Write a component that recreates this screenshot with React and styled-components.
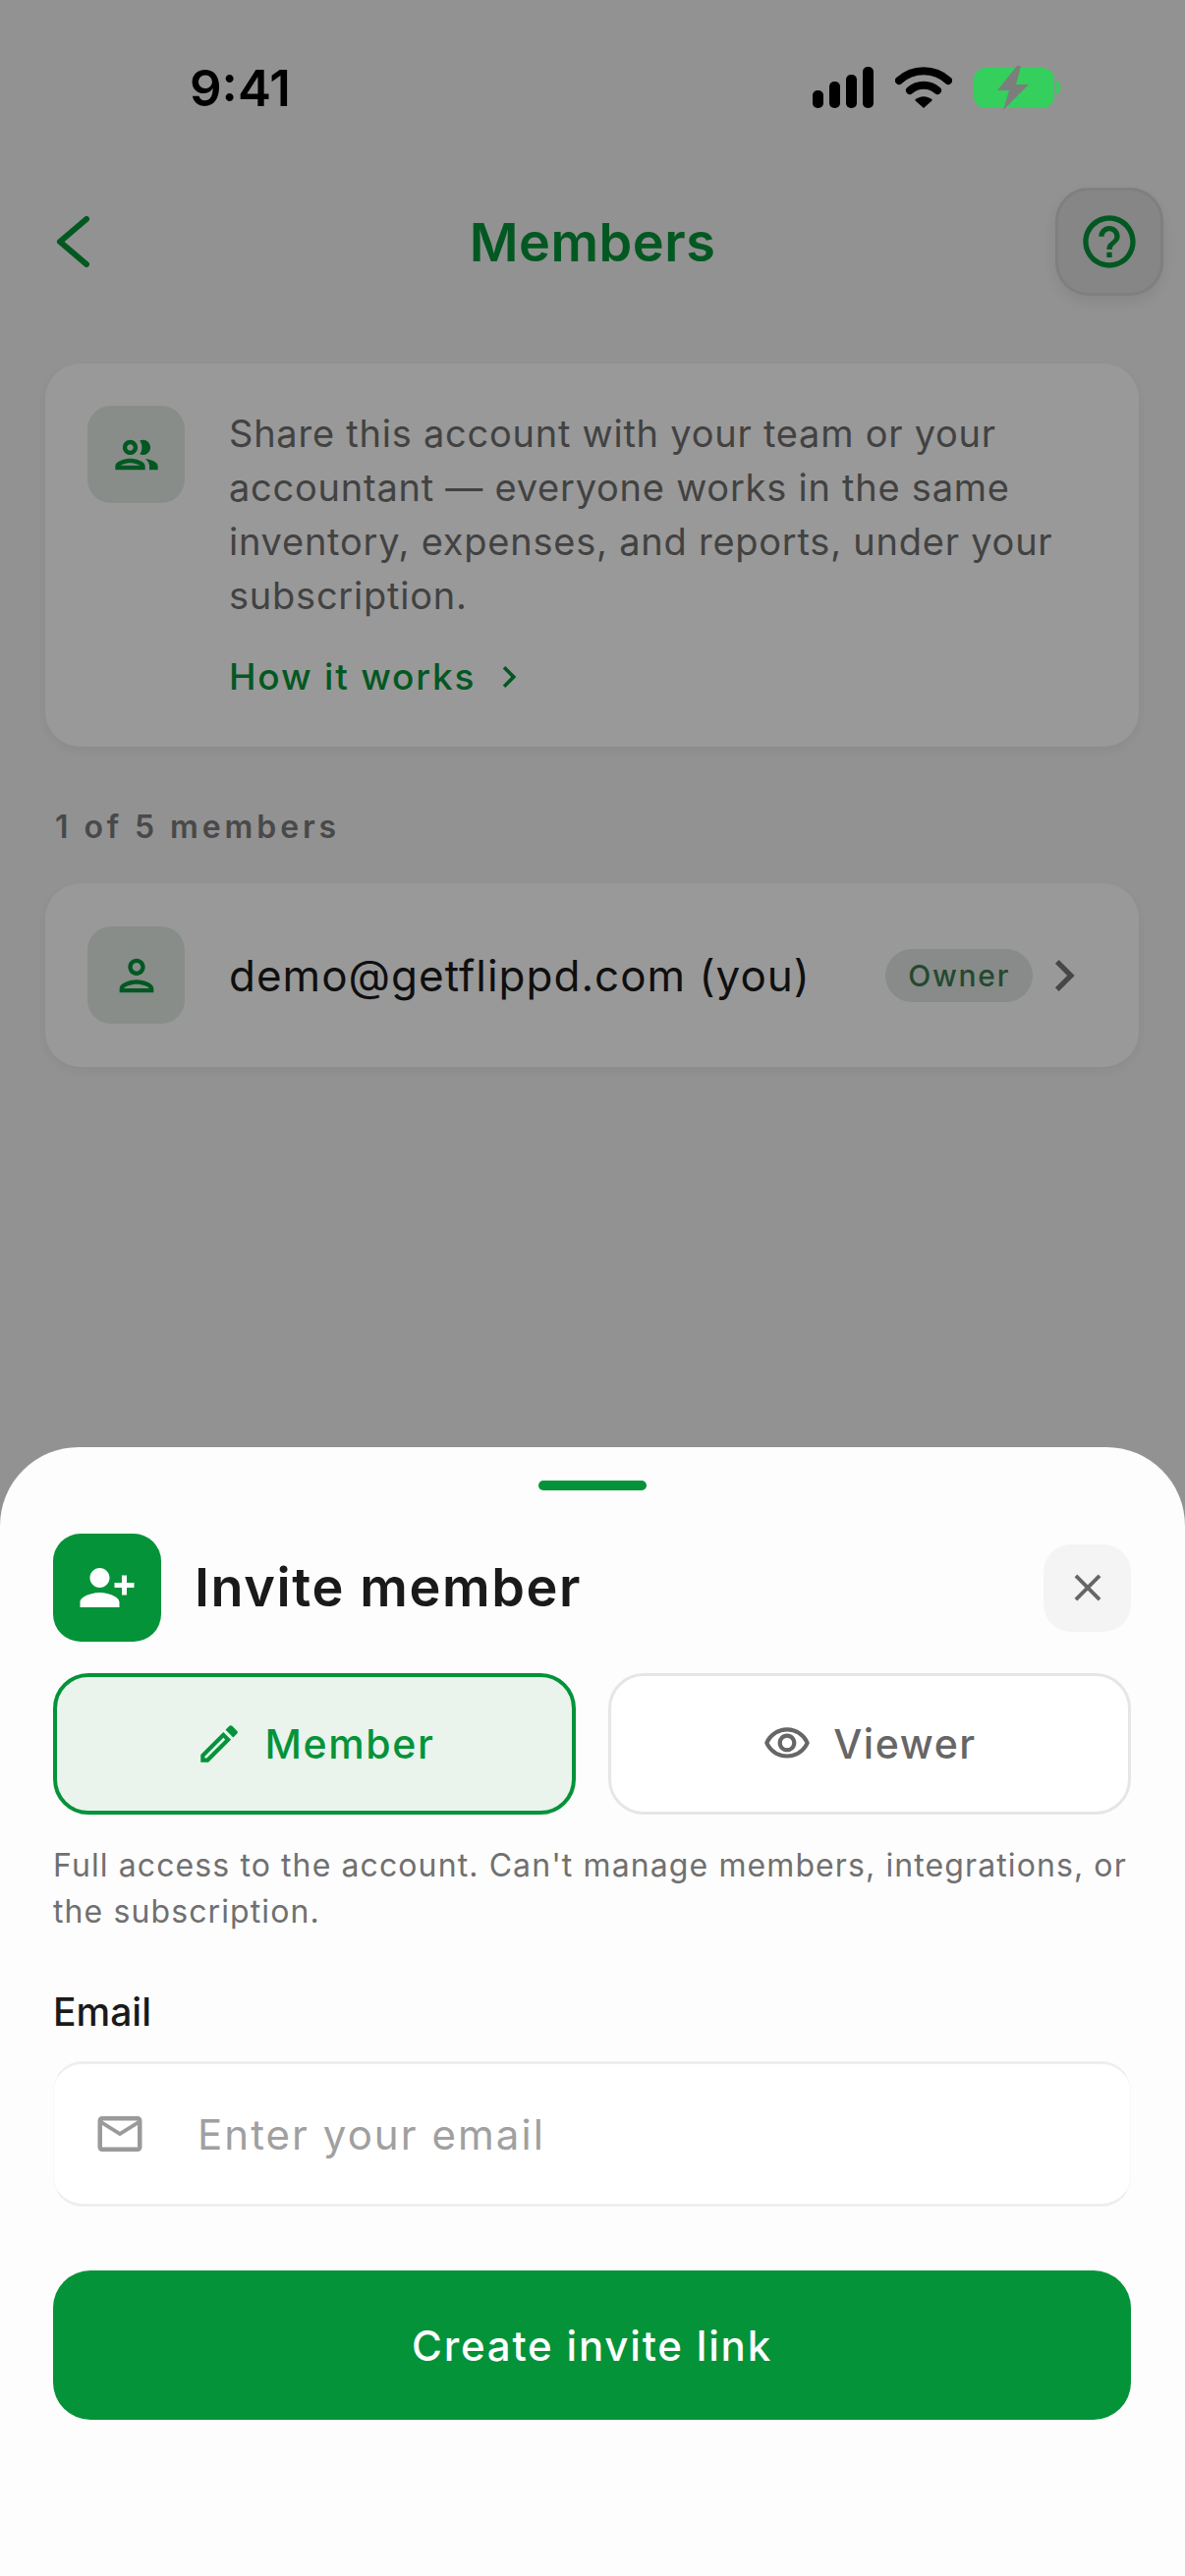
import styled, { createGlobalStyle } from "styled-components";
import {
  MdOutlineGroup,
  MdOutlinePerson,
  MdPersonAddAlt1,
  MdOutlineEdit,
  MdOutlineVisibility,
  MdOutlineMailOutline,
  MdClose,
  MdOutlineHelpOutline,
  MdChevronRight,
} from "react-icons/md";

const GREEN = "#059339";

const GlobalStyle = createGlobalStyle`
  html, body {
    margin: 0;
    padding: 0;
    background: #fdfdfd;
  }
  * {
    box-sizing: border-box;
  }
`;

const Screen = styled.div`
  position: relative;
  width: 1206px;
  height: 2622px;
  overflow: hidden;
  background: #f4f4f4;
  font-family: Inter, "Liberation Sans", sans-serif;
`;

const StatusBar = styled.div`
  position: relative;
  z-index: 2;
  display: flex;
  align-items: center;
  justify-content: space-between;
  height: 176px;
  padding: 2px 125px 0 193px;
`;

const Time = styled.span`
  font-size: 51px;
  font-weight: 600;
  color: #000;
`;

const StatusIcons = styled.div`
  display: flex;
  align-items: center;
  gap: 22px;
`;

const NavBar = styled.header`
  display: flex;
  align-items: center;
  justify-content: space-between;
  height: 110px;
  margin-top: 15px;
  padding: 0 22px 0 50px;
`;

const BackButton = styled.div`
  display: flex;
  width: 82px;
`;

const NavTitle = styled.h1`
  margin: 0;
  font-size: 54px;
  font-weight: 600;
  color: ${GREEN};
  letter-spacing: 0.5px;
`;

const HelpButton = styled.div`
  display: flex;
  align-items: center;
  justify-content: center;
  width: 110px;
  height: 110px;
  border-radius: 34px;
  background: #e0e0e0;
  border: 3px solid #d4d4d4;
  box-shadow: 0 6px 16px rgba(0, 0, 0, 0.08);
  color: ${GREEN};
`;

const Content = styled.main`
  display: flex;
  flex-direction: column;
  padding: 69px 47px 0 46px;
`;

const Card = styled.section`
  display: flex;
  align-items: ${(p) => (p.$center ? "center" : "flex-start")};
  padding: ${(p) => (p.$center ? "44px 43px" : "43px 43px 49px")};
  background: #ffffff;
  border-radius: 36px;
  box-shadow: 0 4px 12px rgba(0, 40, 20, 0.06);
`;

const IconTile = styled.div`
  flex: none;
  display: flex;
  align-items: center;
  justify-content: center;
  width: 99px;
  height: 99px;
  margin-right: 45px;
  border-radius: 24px;
  background: #e3ebe6;
  color: ${GREEN};
`;

const InfoBody = styled.div`
  flex: 1;
  min-width: 0;
`;

const InfoText = styled.p`
  margin: 1px 0 0;
  font-size: 38px;
  line-height: 55px;
  letter-spacing: 0.76px;
  color: #6f6f6f;
`;

const InfoLink = styled.div`
  display: flex;
  align-items: center;
  gap: 12px;
  margin-top: 33px;
  font-size: 37px;
  line-height: 44px;
  font-weight: 500;
  letter-spacing: 1.8px;
  color: ${GREEN};
`;

const SectionLabel = styled.div`
  margin: 62px 0 37px 10px;
  font-size: 32px;
  line-height: 40px;
  font-weight: 600;
  letter-spacing: 3.9px;
  color: #7a7a7a;
`;

const MemberEmail = styled.div`
  flex: 1;
  min-width: 0;
  font-size: 44px;
  letter-spacing: 1px;
  color: #1a1a1a;
  white-space: nowrap;
`;

const RoleBadge = styled.span`
  flex: none;
  padding: 0 23px;
  height: 54px;
  line-height: 54px;
  border-radius: 27px;
  background: #e3e8e4;
  font-size: 30px;
  font-weight: 500;
  letter-spacing: 1.7px;
  color: #3b7a50;
`;

const RowChevron = styled.div`
  display: flex;
  margin-right: 1px;
  color: #777;
`;

const Backdrop = styled.div`
  position: absolute;
  inset: 0;
  z-index: 1;
  background: rgba(0, 0, 0, 0.4);
`;

const Sheet = styled.section`
  position: absolute;
  left: 0;
  right: 0;
  bottom: 0;
  z-index: 3;
  height: 1149px;
  padding: 34px 55px 0 54px;
  background: #fdfdfd;
  border-radius: 80px 80px 0 0;
`;

const Handle = styled.div`
  width: 110px;
  height: 10px;
  margin: 0 auto 44px;
  border-radius: 5px;
  background: ${GREEN};
`;

const SheetHeader = styled.div`
  display: flex;
  align-items: center;
`;

const SheetIcon = styled.div`
  flex: none;
  display: flex;
  align-items: center;
  justify-content: center;
  width: 110px;
  height: 110px;
  margin-right: 34px;
  border-radius: 28px;
  background: ${GREEN};
  color: #fff;
`;

const SheetTitle = styled.h2`
  flex: 1;
  margin: -2px 0 0;
  font-size: 54px;
  font-weight: 600;
  letter-spacing: 1.6px;
  color: #1a1a1a;
`;

const CloseButton = styled.div`
  display: flex;
  align-items: center;
  justify-content: center;
  width: 89px;
  height: 89px;
  border-radius: 28px;
  background: #f4f4f4;
  color: #666;
`;

const RoleTabs = styled.div`
  display: grid;
  grid-template-columns: 532px 532px;
  justify-content: space-between;
  margin-top: 32px;
`;

const RoleTab = styled.div`
  display: flex;
  align-items: center;
  justify-content: center;
  gap: 22px;
  height: 144px;
  border-radius: 36px;
  border: ${(p) => (p.$active ? `4px solid ${GREEN}` : "3px solid #e6e6e6")};
  background: ${(p) => (p.$active ? "#eaf4ed" : "#fff")};
  color: ${(p) => (p.$active ? GREEN : "#666")};
  font-size: 41px;
  font-weight: 500;
  letter-spacing: 1.6px;
`;

const RoleNote = styled.p`
  margin: 28px 0 0;
  font-size: 32px;
  line-height: 47px;
  letter-spacing: 1.1px;
  color: #707070;
`;

const FieldLabel = styled.label`
  display: block;
  margin-top: 57px;
  font-size: 39px;
  line-height: 44px;
  font-weight: 500;
  color: #1a1a1a;
`;

const InputBox = styled.div`
  display: flex;
  align-items: center;
  gap: 52px;
  height: 148px;
  margin-top: 28px;
  padding: 0 40px;
  background: #fff;
  border-radius: 30px;
  border-top: 3px solid #eeeeee;
  border-bottom: 3px solid #eeeeee;
  border-left: 1px solid #f7f7f7;
  border-right: 1px solid #f7f7f7;
  color: #9a9a9a;
`;

const InputText = styled.span`
  font-size: 42px;
  letter-spacing: 2.05px;
  color: #a0a0a0;
`;

const SubmitButton = styled.div`
  display: flex;
  align-items: center;
  justify-content: center;
  height: 152px;
  margin-top: 65px;
  border-radius: 38px;
  background: ${GREEN};
  font-size: 42px;
  font-weight: 500;
  letter-spacing: 1.8px;
  color: #fff;
`;

const SignalIcon = () => (
  <svg width="62" height="42" viewBox="0 0 62 42" fill="#000">
    <rect x="0" y="24" width="11" height="18" rx="5" />
    <rect x="17" y="15" width="11" height="27" rx="5" />
    <rect x="34" y="8" width="11" height="34" rx="5" />
    <rect x="51" y="0" width="11" height="42" rx="5" />
  </svg>
);

const WifiIcon = () => (
  <svg width="58" height="42" viewBox="0 0 58 42" fill="none" stroke="#000" strokeWidth="8" strokeLinecap="round">
    <path d="M4 14 C18 1 40 1 54 14" />
    <path d="M15 24 C23 17 35 17 43 24" />
    <path d="M29 42 L20 34 C25 29 33 29 38 34 Z" fill="#000" stroke="none" />
  </svg>
);

const BatteryIcon = () => (
  <svg width="90" height="45" viewBox="0 0 90 45">
    <rect x="0" y="2" width="82" height="41" rx="12" fill="#34cf5d" />
    <path d="M84 15 C90 16 90 28 84 29 Z" fill="#34cf5d" />
    <path d="M44 0 L24 25 H36 L30 45 L56 19 H43 L48 0 Z" fill="#7d7d7d" />
  </svg>
);

const BackIcon = () => (
  <svg width="44" height="64" viewBox="0 0 44 64" fill="none" stroke={GREEN} strokeWidth="6" strokeLinecap="round" strokeLinejoin="round">
    <path d="M38 9 L11 32 L38 55" />
  </svg>
);

export default function App() {
  return (
    <Screen>
      <GlobalStyle />
      <StatusBar>
        <Time>9:41</Time>
        <StatusIcons>
          <SignalIcon />
          <WifiIcon />
          <BatteryIcon />
        </StatusIcons>
      </StatusBar>
      <NavBar>
        <BackButton>
          <BackIcon />
        </BackButton>
        <NavTitle>Members</NavTitle>
        <HelpButton>
          <MdOutlineHelpOutline size={64} />
        </HelpButton>
      </NavBar>
      <Content>
        <Card>
          <IconTile>
            <MdOutlineGroup size={52} />
          </IconTile>
          <InfoBody>
            <InfoText>
              Share this account with your team or your accountant — everyone works in the same inventory, expenses, and reports, under your subscription.
            </InfoText>
            <InfoLink>
              How it works
              <MdChevronRight size={44} />
            </InfoLink>
          </InfoBody>
        </Card>
        <SectionLabel>1 of 5 members</SectionLabel>
        <Card $center>
          <IconTile>
            <MdOutlinePerson size={52} />
          </IconTile>
          <MemberEmail>demo@getflippd.com (you)</MemberEmail>
          <RoleBadge>Owner</RoleBadge>
          <RowChevron>
            <MdChevronRight size={64} />
          </RowChevron>
        </Card>
      </Content>
      <Backdrop />
      <Sheet>
        <Handle />
        <SheetHeader>
          <SheetIcon>
            <MdPersonAddAlt1 size={60} />
          </SheetIcon>
          <SheetTitle>Invite member</SheetTitle>
          <CloseButton>
            <MdClose size={46} />
          </CloseButton>
        </SheetHeader>
        <RoleTabs>
          <RoleTab $active>
            <MdOutlineEdit size={50} />
            Member
          </RoleTab>
          <RoleTab>
            <MdOutlineVisibility size={50} />
            Viewer
          </RoleTab>
        </RoleTabs>
        <RoleNote>Full access to the account. Can't manage members, integrations, or the subscription.</RoleNote>
        <FieldLabel>Email</FieldLabel>
        <InputBox>
          <MdOutlineMailOutline size={54} />
          <InputText>Enter your email</InputText>
        </InputBox>
        <SubmitButton>Create invite link</SubmitButton>
      </Sheet>
    </Screen>
  );
}
